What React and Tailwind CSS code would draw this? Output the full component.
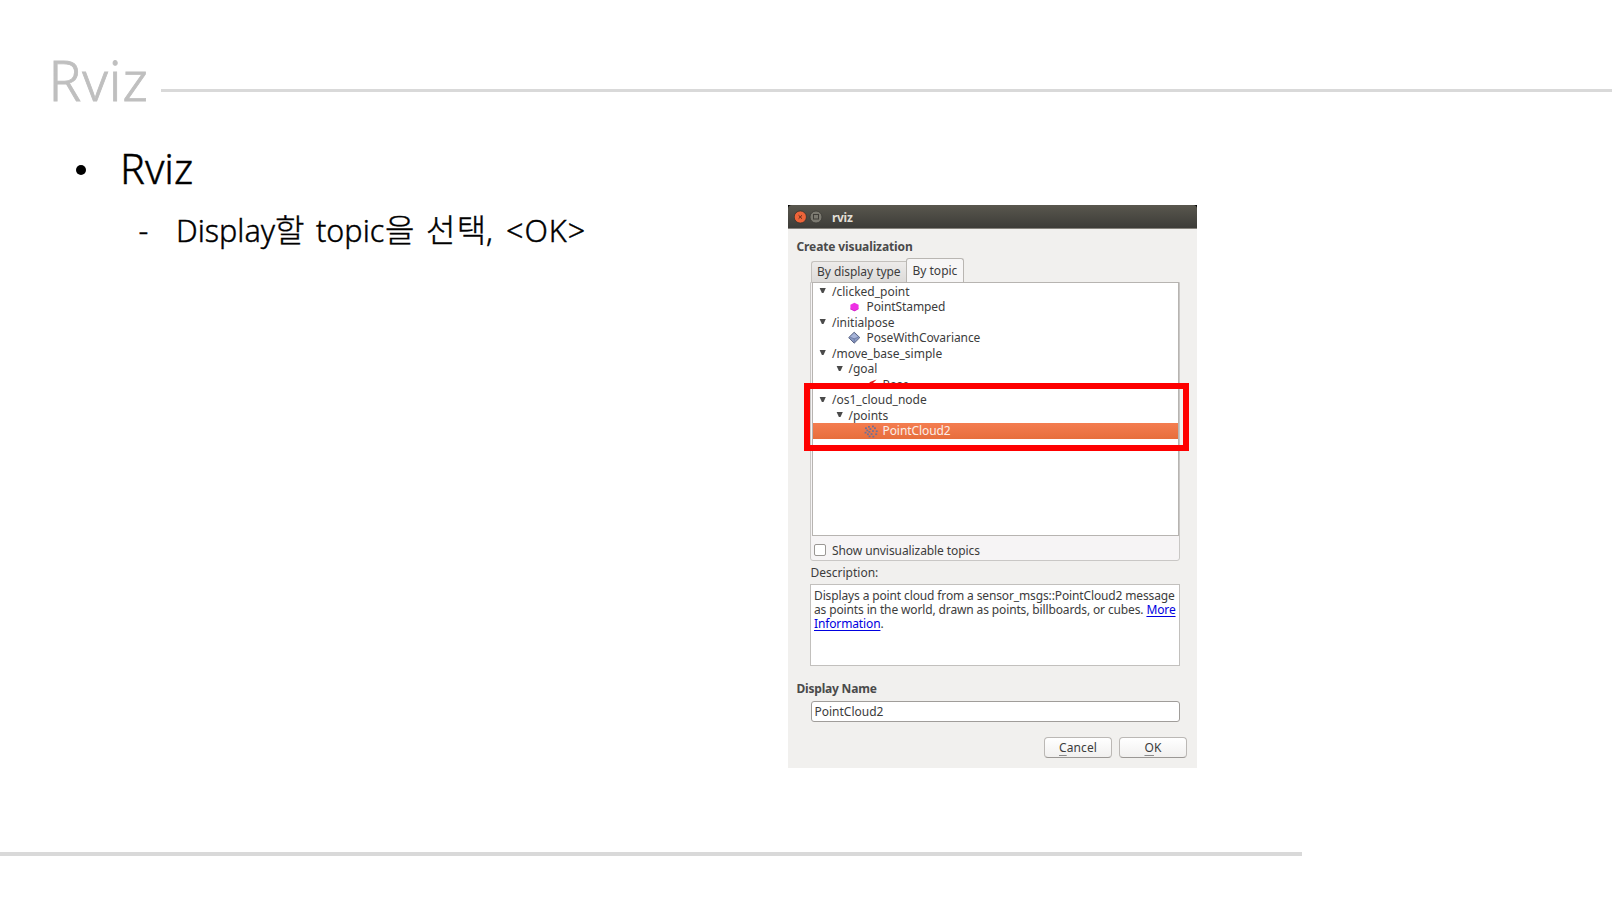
const ink = "text-[#3c3c3c]";

function Expander() {
  return (
    <svg width="7" height="6" viewBox="0 0 7 6" className="shrink-0">
      <path d="M0.6 0.1H6.8L4.5 5H2.9Z" fill="#4a4a4a" />
    </svg>
  );
}

function PointIcon() {
  return (
    <svg width="14" height="14" viewBox="0 0 14 14" className="shrink-0">
      <path d="M6.4 2.7L10.6 4.8V9L6.6 11.2L2.4 9.2V4.8Z" fill="#ee2fe4" />
      <path d="M2.4 9.2L6.6 11.2L10.6 9V8.4L6.6 10.4L2.4 8.6Z" fill="#c922c4" />
    </svg>
  );
}

function PoseCovarianceIcon() {
  return (
    <svg width="14" height="14" viewBox="0 0 14 14" className="shrink-0">
      <path d="M6.2 1.2L11.8 6.6L6.2 12.2L0.7 6.6Z" fill="#8c9cc6" stroke="#4d5878" strokeWidth="0.9" />
      <path d="M6.2 2.2L10.2 6.1L6.2 7.8L2.2 6.1Z" fill="#a7b4d8" />
      <path d="M6.2 7.8V11.8M2.2 6.3L6.2 7.8L10.2 6.3" stroke="#62709a" strokeWidth="0.7" fill="none" />
    </svg>
  );
}

function PoseIcon() {
  return (
    <svg width="14" height="14" viewBox="0 0 14 14" className="shrink-0">
      <path d="M3 9L6 5L12.6 2.6L9 6L5 9L1 12Z" fill="#e01818" />
    </svg>
  );
}

function CloudIcon() {
  const dots = [
    [1, 3.4], [4, 2], [8, 1.6], [2.4, 5.6], [5.4, 4.2], [10, 3.4], [0.6, 7.8], [4.4, 7],
    [8, 6.2], [11.8, 6.4], [3, 9.4], [6.6, 9.2], [11.2, 9.4], [4.6, 11.6], [8.4, 11.8],
  ];
  return (
    <svg width="14" height="14" viewBox="0 0 14 14" className="shrink-0">
      {dots.map(([x, y]) => (
        <rect key={`${x}-${y}`} x={x} y={y} width="1.9" height="1.7" fill="#6f7096" />
      ))}
    </svg>
  );
}

function Group({ label, nested }) {
  return (
    <div className={`flex h-[15.5px] items-center gap-[6px] ${nested ? "pl-[22.5px]" : "pl-[6px]"}`}>
      <Expander />
      <span className="pt-px">{label}</span>
    </div>
  );
}

function Leaf({ icon, label, deep, selected }) {
  return (
    <div
      className={`flex h-[15.5px] items-center gap-[5px] tracking-[-0.08px] ${deep ? "pl-[50.5px]" : "pl-[34.5px]"} ${
        selected ? "bg-linear-to-b from-[#f47d50] to-[#e76e3c] text-[#fbeee8]" : ""
      }`}
    >
      {icon}
      <span className="pt-px">{label}</span>
    </div>
  );
}

function DialogButton({ first, rest }) {
  return (
    <button className="h-[21px] w-[68px] rounded-[4px] border border-[#bbb8b5] border-b-[#9b9895] bg-linear-to-b from-white to-[#f1f0ef] text-center leading-[20px] tracking-[0.1px]">
      <span className="underline decoration-[#8a8a8a] decoration-1 underline-offset-[3px]">{first}</span>
      {rest}
    </button>
  );
}

function Dialog() {
  return (
    <div className={`relative flex h-[563px] w-[409px] flex-col bg-[#f1f0ee] font-['Noto_Sans',sans-serif] text-[12px] font-normal ${ink}`}>
      <div className="bg-black">
        <div className="flex h-[24px] items-center rounded-t-[4px] border-b border-[#85827c] bg-linear-to-b from-[#59574e] to-[#3d3c38] pl-[6px]">
          <svg width="33" height="14" viewBox="0 0 33 14" className="mt-[1px]">
            <circle cx="6.3" cy="7" r="6.1" fill="#ee6439" stroke="#38342e" strokeWidth="0.8" />
            <path d="M4.6 5.3L8 8.7M8 5.3L4.6 8.7" stroke="#5c2a1a" strokeWidth="1" />
            <circle cx="22" cy="7" r="6" fill="#7b7970" stroke="#3a3934" strokeWidth="0.8" />
            <rect x="19.5" y="4.5" width="5" height="4.5" fill="none" stroke="#403e39" strokeWidth="1" />
          </svg>
          <span className="mt-[3px] ml-[5px] font-bold tracking-[-0.3px] text-[#e2dfd7]">rviz</span>
        </div>
      </div>

      <h2 className="mt-[10px] ml-[8.5px] h-[16px] leading-[16px] font-bold tracking-[-0.12px] text-[#4a4a4a]">Create visualization</h2>

      <div className="mt-[3px] ml-[22.5px] flex h-[24px] items-end">
        <div className="h-[21px] w-[95px] rounded-tl-[3px] border border-r-0 border-b-0 border-[#c4c1bd] bg-linear-to-b from-[#edebea] to-[#dddbd9] pl-[5.5px] leading-[20px] tracking-[-0.05px]">
          By display type
        </div>
        <div className="h-[24px] w-[58px] rounded-t-[3px] border border-b-0 border-[#b9b6b2] bg-[#f7f6f6] pl-[6px] leading-[23px]">By topic</div>
      </div>

      <div className="ml-[22px] flex h-[279px] w-[370px] flex-col rounded-b-[3px] border border-[#c9c7c5] bg-[#f6f4f5] pl-px">
        <div className="-mt-px h-[254px] w-[367px] border border-[#b7b4b1] bg-white pt-[0.5px]">
          <Group label="/clicked_point" />
          <Leaf icon={<PointIcon />} label="PointStamped" />
          <Group label="/initialpose" />
          <Leaf icon={<PoseCovarianceIcon />} label="PoseWithCovariance" />
          <Group label="/move_base_simple" />
          <Group label="/goal" nested />
          <Leaf icon={<PoseIcon />} label="Pose" deep />
          <Group label="/os1_cloud_node" />
          <Group label="/points" nested />
          <Leaf icon={<CloudIcon />} label="PointCloud2" deep selected />
        </div>
        <label className="mt-[6px] ml-[2px] flex h-[16px] items-center">
          <span className="h-[12px] w-[12px] rounded-[2px] border border-[#9a9794] bg-white" />
          <span className="mt-px ml-[6px] leading-[16px] tracking-[-0.08px]">Show unvisualizable topics</span>
        </label>
      </div>

      <div className="mt-[4px] ml-[22.5px] h-[16px] leading-[16px]">Description:</div>
      <div className="mt-[3px] ml-[22px] h-[82px] w-[370px] border border-[#c2c0bd] bg-white pt-[4px] pl-[3px] leading-[14px] tracking-[-0.13px] whitespace-nowrap">
        <p>Displays a point cloud from a sensor_msgs::PointCloud2 message</p>
        <p>
          as points in the world, drawn as points, billboards, or cubes.{" "}
          <a className="text-[#0000e0] underline underline-offset-2">More</a>
        </p>
        <p>
          <a className="text-[#0000e0] underline underline-offset-2">Information</a>.
        </p>
      </div>

      <h2 className="mt-[14px] ml-[8.5px] h-[17px] leading-[17px] font-bold tracking-[-0.2px] text-[#4a4a4a]">Display Name</h2>
      <div className="mt-[4px] ml-[23px] h-[21px] w-[369px] rounded-[3px] border border-[#a09d9a] bg-white pl-[2.5px] leading-[19px]">
        PointCloud2
      </div>
      <div className="mt-[15px] ml-[256px] flex gap-[7px]">
        <DialogButton first="C" rest="ancel" />
        <DialogButton first="O" rest="K" />
      </div>

      <div className="absolute top-[178px] left-[16px] h-[68px] w-[385px] border-[6px] border-[#fe0000]" />
    </div>
  );
}

export default function App() {
  return (
    <div className="flex h-[903px] w-[1612px] flex-col overflow-hidden bg-white font-['Noto_Sans','Noto_Sans_CJK_KR',sans-serif] font-light text-black">
      <header className="flex h-[109px] pt-[50px] pl-[48.5px]">
        <h1 className="w-[112.5px] text-[54.6px] leading-[60px] tracking-[1px] text-[#bfbfbf] [-webkit-text-stroke:0.8px_#bfbfbf]">Rviz</h1>
        <div className="mt-[39px] h-[3px] flex-1 bg-[#d9d9d9]" />
      </header>

      <main className="flex h-[743px]">
        <section className="w-[788px] [-webkit-text-stroke:0.4px_#000]">
          <div className="mt-[34px] flex h-[50px] items-center pl-[76px]">
            <span className="mt-[4px] h-[10px] w-[10px] rounded-full bg-black" />
            <span className="ml-[34px] text-[41.5px] leading-[50px]">Rviz</span>
          </div>
          <div className="mt-[17px] flex h-[40px] pl-[138.5px] text-[30.5px] leading-[40px] whitespace-nowrap">
            <span className="w-[37.5px]">-</span>
            <span className="w-[99px]">Display</span>
            <span className="-mt-[2px] w-[41px] font-['Noto_Sans_CJK_KR'] text-[32px]">할</span>
            <span className="w-[69px]">topic</span>
            <span className="-mt-[2px] w-[41px] font-['Noto_Sans_CJK_KR'] text-[32px]">을</span>
            <span className="-mt-[2px] w-[60px] font-['Noto_Sans_CJK_KR'] text-[32px] tracking-[1.2px]">선택</span>
            <span className="w-[20px]">,</span>
            <span className="tracking-[1px]">&lt;OK&gt;</span>
          </div>
        </section>
        <div className="pt-[96px]">
          <Dialog />
        </div>
      </main>

      <div className="h-[4px] w-[1302px] bg-[#d9d9d9]" />
    </div>
  );
}
